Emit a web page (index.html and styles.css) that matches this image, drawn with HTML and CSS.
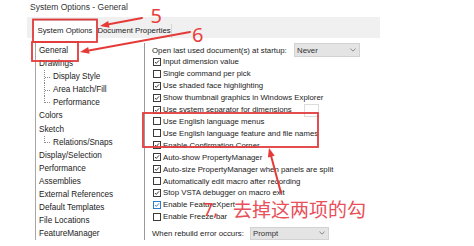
FILE: index.html
```html
<!DOCTYPE html>
<html lang="en">
<head>
<meta charset="UTF-8" />
<title>System Options - General</title>
<link rel="stylesheet" href="styles.css">
</head>
<body>

<div class="window">
  <div class="title">System Options - General</div>
  <div class="tabs">
    <div class="tab active">System Options</div>
    <div class="tab">Document Properties</div>
  </div>

  <div class="content">
    <ul class="tree">
      <li>General</li>
      <li>Drawings</li>
      <li class="child"><span class="branch"><i></i></span>Display Style</li>
      <li class="child"><span class="branch"><i></i></span>Area Hatch/Fill</li>
      <li class="child last"><span class="branch"><i></i></span>Performance</li>
      <li>Colors</li>
      <li>Sketch</li>
      <li class="child last"><span class="branch"><i></i></span>Relations/Snaps</li>
      <li>Display/Selection</li>
      <li>Performance</li>
      <li>Assemblies</li>
      <li>External References</li>
      <li>Default Templates</li>
      <li>File Locations</li>
      <li>FeatureManager</li>
    </ul>

    <div class="options">
      <div class="row-select">
        <span class="label open-label">Open last used document(s) at startup:</span>
        <span class="select never">Never <svg class="chev" viewBox="0 0 7 4"><polyline points="0.5,0.5 3.5,3.3 6.5,0.5" /></svg></span>
      </div>

      <ul class="checks">
        <li><span class="box"><svg viewBox="0 0 8 8"><polyline points="1.3,4 3.1,5.9 6.7,1.8" /></svg></span>Input dimension value</li>
        <li><span class="box"></span>Single command per pick</li>
        <li><span class="box"><svg viewBox="0 0 8 8"><polyline points="1.3,4 3.1,5.9 6.7,1.8" /></svg></span>Use shaded face highlighting</li>
        <li><span class="box"><svg viewBox="0 0 8 8"><polyline points="1.3,4 3.1,5.9 6.7,1.8" /></svg></span>Show thumbnail graphics in Windows Explorer</li>
        <li><span class="box"><svg viewBox="0 0 8 8"><polyline points="1.3,4 3.1,5.9 6.7,1.8" /></svg></span><span class="sep-label">Use system separator for dimensions</span><span class="sep-box"></span></li>
        <li><span class="box"></span>Use English language menus</li>
        <li><span class="box"></span>Use English language feature and file names</li>
        <li><span class="box"><svg viewBox="0 0 8 8"><polyline points="1.3,4 3.1,5.9 6.7,1.8" /></svg></span>Enable Confirmation Corner</li>
        <li><span class="box"><svg viewBox="0 0 8 8"><polyline points="1.3,4 3.1,5.9 6.7,1.8" /></svg></span>Auto-show PropertyManager</li>
        <li><span class="box"><svg viewBox="0 0 8 8"><polyline points="1.3,4 3.1,5.9 6.7,1.8" /></svg></span>Auto-size PropertyManager when panels are split</li>
        <li><span class="box"></span>Automatically edit macro after recording</li>
        <li><span class="box"><svg viewBox="0 0 8 8"><polyline points="1.3,4 3.1,5.9 6.7,1.8" /></svg></span>Stop VSTA debugger on macro exit</li>
        <li><span class="box hot"><svg viewBox="0 0 8 8"><polyline points="1.3,4 3.1,5.9 6.7,1.8" /></svg></span>Enable FeatureXpert</li>
        <li><span class="box"></span>Enable Freeze bar</li>
      </ul>

      <div class="row-select rebuild">
        <span class="label rebuild-label">When rebuild error occurs:</span>
        <span class="select prompt">Prompt <svg class="chev" viewBox="0 0 7 4"><polyline points="0.5,0.5 3.5,3.3 6.5,0.5" /></svg></span>
      </div>
    </div>
  </div>
</div>

<!-- red notes drawn over the screenshot -->
<svg class="marks" viewBox="0 0 474 246">
  <rect x="33" y="19.5" width="64" height="22.5" />
  <rect x="32" y="42" width="46" height="19" />
  <rect x="143" y="113" width="175" height="34" />

  <path class="line" d="M142 18 L108.8 24.3" />
  <polygon points="100,26 109.5,27.8 108.2,20.9" />
  <path class="line" d="M190 32 L88.9 50.4" />
  <polygon points="80,52 89.5,53.8 88.2,47" />
  <path class="line" d="M281 193 L271.3 156.7" />
  <polygon points="269,148 274.7,155.8 267.9,157.6" />

  <text class="num" x="150.5" y="23">5</text>
  <text class="num" x="192" y="42">6</text>
  <text class="num seven" x="203" y="216">7,</text>
  <text class="note" x="233" y="217">去掉这两项的勾</text>
</svg>

</body>
</html>
```

FILE: styles.css
```css
body { margin: 0; width: 474px; height: 246px; overflow: hidden; position: relative; background: #fff; color: #222; font-family: "Liberation Sans", Arial, sans-serif; }
ul { margin: 0; padding: 0; list-style: none; }

.window { margin-left: 27px; width: 353px; }
.title { height: 17px; line-height: 14px; padding-left: 3px; font-size: 8.5px; color: #333; }

.tabs { height: 21px; background: #f0f0f0; display: flex; align-items: flex-end; padding-left: 6px; }
.tab { box-sizing: border-box; width: 75px; height: 14px; line-height: 14px; font-size: 7.8px; text-align: center; border-right: 1px solid #d6d6d6; }
.tab.active { width: 64px; height: 18px; padding-top: 3px; background: #fff; border: 1px solid #d4d4d4; border-bottom: none; }

.content { display: flex; height: 202px; }

.tree { margin: 5px 0 0 8px; padding-top: 1px; width: 109px; box-sizing: border-box; border-left: 1px solid #a6a6a6; font-size: 8.2px; }
.tree li { display: flex; height: 13.1px; line-height: 13.1px; padding-left: 3px; }
.tree .child { padding-left: 8px; }
.branch { display: flex; flex-direction: column; width: 5px; margin-right: 3px; border-left: 1px dotted #8a8a8a; }
.branch i { height: 7px; border-bottom: 1px dotted #8a8a8a; }
.child.last .branch { align-self: flex-start; height: 7px; }

.options { flex: 1; margin-top: 5px; padding-left: 7px; border-left: 1px solid #9a9a9a; font-size: 7.8px; }

.row-select { display: flex; align-items: center; height: 14px; }
.label { flex: none; }
.open-label { width: 142px; }
.rebuild-label { width: 98px; }
.rebuild { margin-top: 4px; height: 13px; }
.select { box-sizing: border-box; display: flex; align-items: center; justify-content: space-between; height: 100%; padding: 0 3px 0 2px; background: #e4e4e4; border: 1px solid #d2d2d2; color: #333; }
.never { width: 66px; }
.prompt { width: 79px; }
.chev { width: 6px; height: 4px; fill: none; stroke: #777; stroke-width: 1; }

.checks { margin-top: -1px; }
.checks li { display: flex; align-items: center; height: 11.92px; }
.box { box-sizing: border-box; flex: none; width: 8px; height: 8px; margin: 0 2px 0 1px; border: 1px solid #3a3a3a; background: #fff; }
.box svg { display: block; width: 6px; height: 6px; fill: none; stroke: #222; stroke-width: 1.2; }
.box.hot { border-color: #2a7bd4; }
.box.hot svg { stroke: #2a7bd4; }
.sep-label { width: 141px; flex: none; }
.sep-box { box-sizing: border-box; width: 15px; height: 13px; margin-top: 1px; border: 1px solid #dcdcdc; background: #fff; }

.marks { position: absolute; left: 0; top: 0; width: 474px; height: 246px; pointer-events: none; }
.marks rect { fill: none; stroke: #e23b3b; stroke-width: 1.8; }
.marks .line { fill: none; stroke: #e53a38; stroke-width: 2; stroke-linecap: round; }
.marks polygon { fill: #e53a38; }
.marks .num { fill: #e8403c; font-family: "Noto Sans", "Liberation Sans", sans-serif; font-size: 20px; }
.marks .seven { font-size: 18px; }
.marks .note { fill: #e8505a; font-family: "Noto Sans CJK SC", sans-serif; font-size: 19px; }
```
